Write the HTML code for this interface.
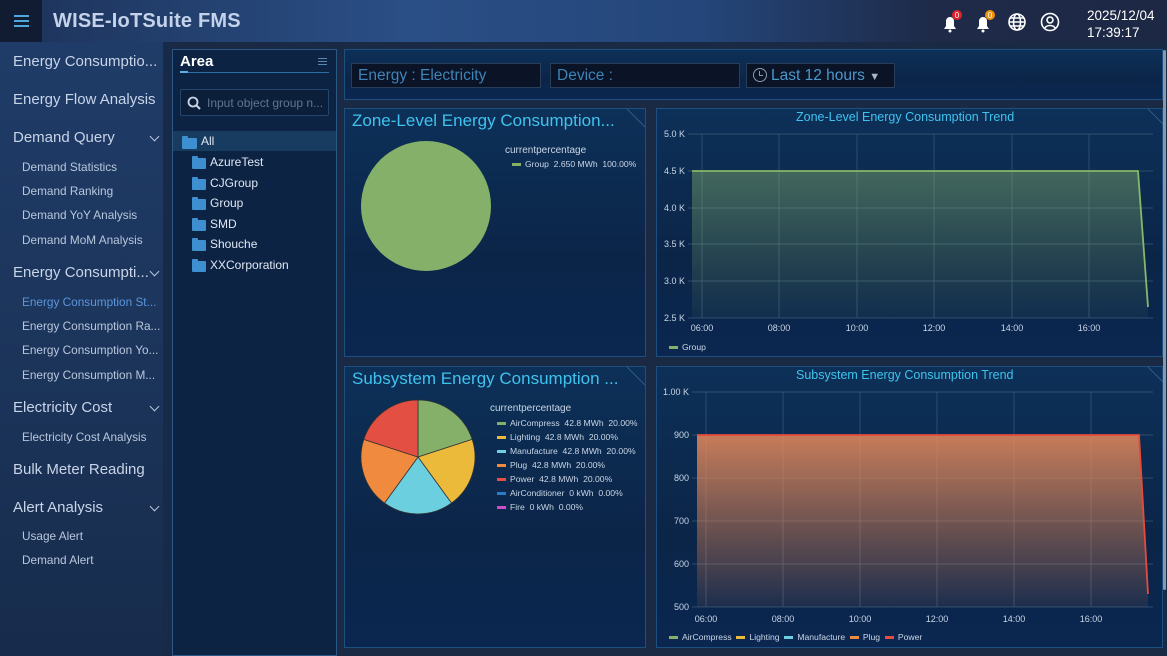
<!DOCTYPE html>
<html><head><meta charset="utf-8"><style>
*{margin:0;padding:0;box-sizing:border-box}
body{width:1167px;height:656px;overflow:hidden;background:#1b2a44;font-family:"Liberation Sans","DejaVu Sans",sans-serif;position:relative}
.a{position:absolute}
.hdr{left:0;top:0;width:1167px;height:42px;background:linear-gradient(90deg,#1d335a 0%,#2a4f86 35%,#24467a 60%,#1e2a48 80%,#1c2844 100%)}
.side{left:0;top:42px;width:163px;height:614px;background:linear-gradient(180deg,#1f3c68,#1b3358 60%,#172c4c)}
.sep{left:163px;top:42px;width:9px;height:614px;background:#172a47}
.m{position:absolute;left:13px;color:#c8d4e8;font-size:15px;white-space:nowrap}
.s{position:absolute;left:22px;color:#b9c7dd;font-size:11.8px;white-space:nowrap}
.chev{position:absolute;left:151px;width:7px;height:7px;border-right:1.3px solid #b9c7dd;border-bottom:1.3px solid #b9c7dd;transform:rotate(45deg)}
.area{left:172px;top:49px;width:165px;height:607px;background:#0c2343;border:1px solid #2c5885}
.tree{position:absolute;left:37px;color:#dfe8f4;font-size:12px}
.fold{position:absolute;left:19px;width:14px;height:11px;background:#3d8fd0;border-radius:1px}
.fold:before{content:"";position:absolute;left:0;top:-2px;width:6px;height:3px;background:#3d8fd0;border-radius:1px 1px 0 0}
.pnl{background:linear-gradient(180deg,#0d3058,#0b2548 60%,#0b2750);border:1px solid #1d4f80}
.box{position:absolute;top:63px;height:25px;line-height:23px;background:#0b1326;border:1px solid #2a3e5a;color:#3d84b8;font-size:15.5px;padding:0 6px;white-space:nowrap}
.pt{position:absolute;color:#3fc3ee;font-size:17px;white-space:nowrap}
.ct{position:absolute;color:#3fc3ee;font-size:12.5px;white-space:nowrap}
.lg{position:absolute;color:#c9d6e6;font-size:8.6px;white-space:nowrap}
.lg i{display:inline-block;width:9px;height:3px;margin-right:4px;vertical-align:middle}
svg text{font-family:"Liberation Sans",sans-serif}
</style></head><body>
<div class="a hdr"></div>
<div class="a" style="left:0;top:0;width:42px;height:42px;background:#111c33"></div>
<div class="a" style="left:14px;top:15px;width:15px;height:2px;background:#4fa8dc;box-shadow:0 5px 0 #4fa8dc,0 10px 0 #4fa8dc"></div>
<div class="a" style="left:53px;top:10px;color:#c5d3ea;font-size:20px;font-weight:bold;letter-spacing:0.2px">WISE-IoTSuite FMS</div>
<svg class="a" style="left:938px;top:10px" width="130" height="24" viewBox="0 0 130 24">
<g fill="#fff"><path d="M6 19h12l-2-3v-5a4 4 0 0 0-8 0v5z"/><circle cx="12" cy="21" r="1.5"/></g>
<circle cx="19" cy="5" r="5" fill="#e0222c"/><text x="19" y="8" font-size="8" fill="#fff" text-anchor="middle">0</text>
<g fill="#fff" transform="translate(33 0)"><path d="M6 19h12l-2-3v-5a4 4 0 0 0-8 0v5z"/><circle cx="12" cy="21" r="1.5"/></g>
<circle cx="52" cy="5" r="5" fill="#f0900c"/><text x="52" y="8" font-size="8" fill="#fff" text-anchor="middle">0</text>
<g fill="none" stroke="#fff" stroke-width="1.6"><circle cx="79" cy="12" r="8"/><ellipse cx="79" cy="12" rx="3.5" ry="8"/><path d="M71 12h16M72.5 8h13M72.5 16h13"/></g>
<g fill="none" stroke="#fff" stroke-width="1.6"><circle cx="112" cy="12" r="8.5"/><circle cx="112" cy="10" r="3"/><path d="M106.5 18.5a6 5 0 0 1 11 0"/></g>
</svg>
<div class="a" style="left:1087px;top:7px;color:#fff;font-size:13.5px;line-height:17px">2025/12/04<br>17:39:17</div>

<div class="a side"></div>
<div class="a sep"></div>
<div class="m" style="top:53px">Energy Consumptio...</div>
<div class="m" style="top:91px">Energy Flow Analysis</div>
<div class="m" style="top:129px">Demand Query</div><div class="chev" style="top:133px"></div>
<div class="s" style="top:160px">Demand Statistics</div>
<div class="s" style="top:184px">Demand Ranking</div>
<div class="s" style="top:208px">Demand YoY Analysis</div>
<div class="s" style="top:233px">Demand MoM Analysis</div>
<div class="m" style="top:264px">Energy Consumpti...</div><div class="chev" style="top:268px"></div>
<div class="s" style="top:295px;color:#5b96dc">Energy Consumption St...</div>
<div class="s" style="top:319px">Energy Consumption Ra...</div>
<div class="s" style="top:343px">Energy Consumption Yo...</div>
<div class="s" style="top:368px">Energy Consumption M...</div>
<div class="m" style="top:399px">Electricity Cost</div><div class="chev" style="top:403px"></div>
<div class="s" style="top:430px">Electricity Cost Analysis</div>
<div class="m" style="top:461px">Bulk Meter Reading</div>
<div class="m" style="top:499px">Alert Analysis</div><div class="chev" style="top:503px"></div>
<div class="s" style="top:529px">Usage Alert</div>
<div class="s" style="top:553px">Demand Alert</div>

<div class="a area"></div>
<div class="a" style="left:180px;top:53px;color:#fff;font-size:15px;font-weight:bold">Area</div>
<div class="a" style="left:180px;top:72px;width:149px;height:1px;background:#2d6ea5"></div>
<div class="a" style="left:180px;top:71px;width:8px;height:2px;background:#5bb0e5"></div>
<div class="a" style="left:318px;top:58px;width:9px;height:1px;background:#5b86b0;box-shadow:0 3px 0 #5b86b0,0 6px 0 #5b86b0"></div>
<div class="a" style="left:180px;top:89px;width:149px;height:27px;background:#0c1f3a;border:1px solid #24466c;border-radius:2px"></div>
<svg class="a" style="left:187px;top:96px" width="14" height="14"><circle cx="6" cy="6" r="4.5" fill="none" stroke="#c8d4e4" stroke-width="1.8"/><path d="M9.5 9.5l3.5 3.5" stroke="#c8d4e4" stroke-width="2"/></svg>
<div class="a" style="left:207px;top:96px;color:#5f7690;font-size:12px">Input object group n...</div>
<div class="a" style="left:173px;top:131px;width:163px;height:20px;background:#183c60"></div>
<div class="fold" style="left:182px;top:138px;width:15px"></div>
<div class="tree" style="left:201px;top:134px">All</div>
<div class="fold" style="top:158px;left:192px"></div><div class="tree" style="left:210px;top:155px">AzureTest</div>
<div class="fold" style="top:179px;left:192px"></div><div class="tree" style="left:210px;top:176px">CJGroup</div>
<div class="fold" style="top:199px;left:192px"></div><div class="tree" style="left:210px;top:196px">Group</div>
<div class="fold" style="top:220px;left:192px"></div><div class="tree" style="left:210px;top:217px">SMD</div>
<div class="fold" style="top:240px;left:192px"></div><div class="tree" style="left:210px;top:237px">Shouche</div>
<div class="fold" style="top:261px;left:192px"></div><div class="tree" style="left:210px;top:258px">XXCorporation</div>

<div class="a pnl" style="left:344px;top:49px;width:819px;height:51px"></div>
<div class="box" style="left:351px;width:190px">Energy : Electricity</div>
<div class="box" style="left:550px;width:190px">Device :</div>
<div class="box" style="left:746px;width:149px;color:#4a98cc"><span style="display:inline-block;width:14px;height:14px;border:1.5px solid #8a9cb0;border-radius:50%;vertical-align:-2px;position:relative;margin-right:4px"><span style="position:absolute;left:5px;top:2px;width:4px;height:5px;border-left:1.5px solid #8a9cb0;border-bottom:1.5px solid #8a9cb0"></span></span>Last 12 hours <span style="color:#a8b8c8;font-size:11px">▼</span></div>

<div class="a pnl" style="left:344px;top:108px;width:302px;height:249px"></div>
<div class="a pnl" style="left:656px;top:108px;width:507px;height:249px"></div>
<div class="a pnl" style="left:344px;top:366px;width:302px;height:282px"></div>
<div class="a pnl" style="left:656px;top:366px;width:507px;height:282px"></div>

<div class="pt" style="left:352px;top:111px">Zone-Level Energy Consumption...</div>
<div class="pt" style="left:352px;top:369px">Subsystem Energy Consumption ...</div>
<div class="ct" style="left:796px;top:110px">Zone-Level Energy Consumption Trend</div>
<div class="ct" style="left:796px;top:368px">Subsystem Energy Consumption Trend</div>

<svg class="a" style="left:0;top:0" width="1167" height="656">
<defs>
<linearGradient id="g1" x1="0" y1="0" x2="0" y2="1"><stop offset="0" stop-color="#84b06a" stop-opacity="0.45"/><stop offset="1" stop-color="#84b06a" stop-opacity="0.05"/></linearGradient>
<linearGradient id="g2" x1="0" y1="0" x2="0" y2="1"><stop offset="0" stop-color="#e88a5a" stop-opacity="0.85"/><stop offset="1" stop-color="#e88a5a" stop-opacity="0.08"/></linearGradient>
</defs>
<g stroke="#2d5273" stroke-width="0.7" fill="none">
<path d="M627 109l18 18M1148 109l15 15M627 367l18 18M1148 367l15 15" stroke="#3a6f9a"/>
</g>
<circle cx="426" cy="206" r="65" fill="#84b06a"/>
<g stroke="#333" stroke-width="0.8">
<path d="M418 457L418 400A57 57 0 0 1 472.2 439.4Z" fill="#84b06a"/>
<path d="M418 457L472.2 439.4A57 57 0 0 1 451.5 503.1Z" fill="#ecba3a"/>
<path d="M418 457L451.5 503.1A57 57 0 0 1 384.5 503.1Z" fill="#6ccfe0"/>
<path d="M418 457L384.5 503.1A57 57 0 0 1 363.8 439.4Z" fill="#ef8a3e"/>
<path d="M418 457L363.8 439.4A57 57 0 0 1 418 400Z" fill="#e34f42"/>
</g>
<g stroke="#3b5a78" stroke-width="0.7">
<path d="M688 134H1153M688 171H1153M688 208H1153M688 244H1153M688 281H1153M688 318H1153"/>
<path d="M702 134V318M779 134V318M857 134V318M934 134V318M1012 134V318M1089 134V318"/>
<path d="M692 392H1153M692 435H1153M692 478H1153M692 521H1153M692 564H1153M692 607H1153"/>
<path d="M706 392V607M783 392V607M860 392V607M937 392V607M1014 392V607M1091 392V607"/>
</g>
<path d="M692 171H1138L1148 307L1148 318H692Z" fill="url(#g1)"/>
<path d="M692 171H1138L1148 307" fill="none" stroke="#84b86a" stroke-width="1.8"/>
<path d="M697 435H1139L1148 594V607H697Z" fill="url(#g2)"/>
<path d="M697 435H1139L1148 594" fill="none" stroke="#e84a3a" stroke-width="1.8"/>
<g fill="#c9d6e6" font-size="9" text-anchor="end">
<text x="685" y="137">5.0 K</text><text x="685" y="174">4.5 K</text><text x="685" y="211">4.0 K</text><text x="685" y="247">3.5 K</text><text x="685" y="284">3.0 K</text><text x="685" y="321">2.5 K</text>
<text x="689" y="395">1.00 K</text><text x="689" y="438">900</text><text x="689" y="481">800</text><text x="689" y="524">700</text><text x="689" y="567">600</text><text x="689" y="610">500</text>
</g>
<g fill="#c9d6e6" font-size="9" text-anchor="middle">
<text x="702" y="331">06:00</text><text x="779" y="331">08:00</text><text x="857" y="331">10:00</text><text x="934" y="331">12:00</text><text x="1012" y="331">14:00</text><text x="1089" y="331">16:00</text>
<text x="706" y="622">06:00</text><text x="783" y="622">08:00</text><text x="860" y="622">10:00</text><text x="937" y="622">12:00</text><text x="1014" y="622">14:00</text><text x="1091" y="622">16:00</text>
</g>
</svg>

<div class="lg" style="left:505px;top:145px;font-size:10px">currentpercentage</div>
<div class="lg" style="left:512px;top:159px"><i style="background:#84b06a"></i>Group&nbsp; 2.650 MWh&nbsp; 100.00%</div>
<div class="lg" style="left:490px;top:403px;font-size:10px">currentpercentage</div>
<div class="lg" style="left:497px;top:418px"><i style="background:#84b06a"></i>AirCompress&nbsp; 42.8 MWh&nbsp; 20.00%</div>
<div class="lg" style="left:497px;top:432px"><i style="background:#ecba3a"></i>Lighting&nbsp; 42.8 MWh&nbsp; 20.00%</div>
<div class="lg" style="left:497px;top:446px"><i style="background:#6ccfe0"></i>Manufacture&nbsp; 42.8 MWh&nbsp; 20.00%</div>
<div class="lg" style="left:497px;top:460px"><i style="background:#ef8a3e"></i>Plug&nbsp; 42.8 MWh&nbsp; 20.00%</div>
<div class="lg" style="left:497px;top:474px"><i style="background:#e34f42"></i>Power&nbsp; 42.8 MWh&nbsp; 20.00%</div>
<div class="lg" style="left:497px;top:488px"><i style="background:#2a7cc8"></i>AirConditioner&nbsp; 0 kWh&nbsp; 0.00%</div>
<div class="lg" style="left:497px;top:502px"><i style="background:#c94fc2"></i>Fire&nbsp; 0 kWh&nbsp; 0.00%</div>
<div class="lg" style="left:669px;top:342px"><i style="background:#84b06a"></i>Group</div>
<div class="lg" style="left:669px;top:632px"><i style="background:#84b06a"></i>AirCompress&nbsp;&nbsp;<i style="background:#ecba3a"></i>Lighting&nbsp;&nbsp;<i style="background:#6ccfe0"></i>Manufacture&nbsp;&nbsp;<i style="background:#ef8a3e"></i>Plug&nbsp;&nbsp;<i style="background:#e34f42"></i>Power</div>
<div class="a" style="left:1163px;top:50px;width:3px;height:540px;background:#8a97a8;border-radius:2px"></div>
</body></html>
